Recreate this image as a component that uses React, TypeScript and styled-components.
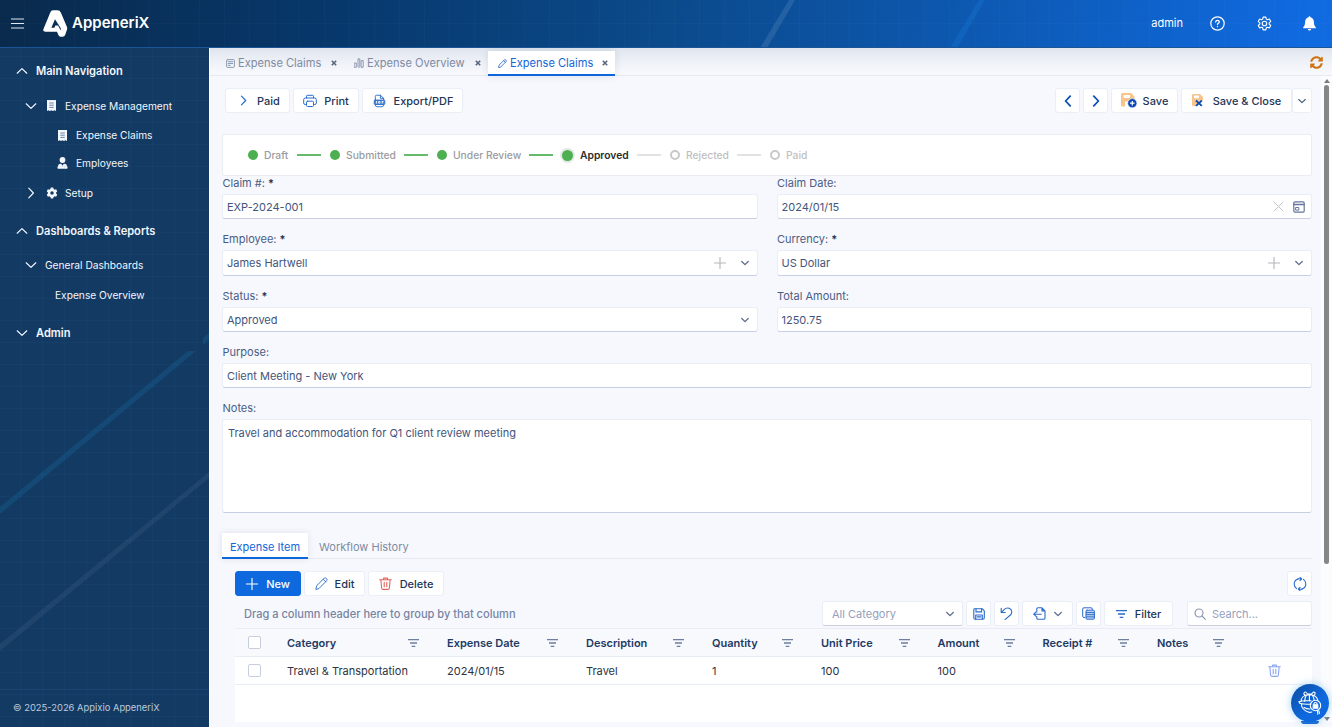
import type { ReactNode } from "react";
import styled, { createGlobalStyle, css } from "styled-components";

const GlobalStyle = createGlobalStyle`
  * {
    box-sizing: border-box;
  }

  body {
    margin: 0;
    overflow: hidden;
    font-family: Inter, "Liberation Sans", sans-serif;
    font-size: 11px;
    color: #41557d;
    background: #f0f5fb;
  }
`;

const Page = styled.div`
  display: flex;
  flex-direction: column;
  width: 1332px;
  height: 727px;
  overflow: hidden;
`;

/* ---------- header ---------- */

const Header = styled.header`
  position: relative;
  display: flex;
  align-items: center;
  flex: none;
  height: 48px;
  padding: 0 16px 1px 11px;
  color: #fff;
  border-bottom: 1px solid #1b5596;
  background: linear-gradient(
    97deg,
    #092a4c 0%,
    #07376a 24%,
    #0b4a8b 50%,
    #0d5ab5 75%,
    #106ae0 98%
  );
`;

const Decor = styled.svg`
  position: absolute;
  inset: 0;
  width: 100%;
  height: 100%;
  pointer-events: none;
`;

const Brand = styled.div`
  display: flex;
  align-items: center;
  gap: 4px;
  margin-left: 19px;
  font-size: 15px;
  font-weight: 600;
  line-height: 20px;
`;

const BrandName = styled.span`
  padding-bottom: 1px;
`;

const HeaderActions = styled.div`
  display: flex;
  align-items: center;
  margin-left: auto;
`;

const UserName = styled.span`
  margin-right: 27px;
  font-size: 11px;
`;

const HeaderIcon = styled.span<{ $gap?: number }>`
  display: flex;
  margin-right: ${({ $gap }) => $gap ?? 0}px;
`;

/* ---------- sidebar ---------- */

const Body = styled.div`
  display: flex;
  flex: 1;
  min-height: 0;
`;

const Sidebar = styled.aside`
  position: relative;
  display: flex;
  flex-direction: column;
  flex: none;
  width: 209px;
  padding-top: 6px;
  color: #f3f7fc;
  background: #133a63;
`;

const NavRow = styled.div<{ $indent: number; $height: number; $group?: boolean }>`
  display: flex;
  align-items: center;
  height: ${({ $height }) => $height}px;
  padding-left: ${({ $indent }) => $indent}px;
  font-size: ${({ $group }) => ($group ? 11.1 : 10.2)}px;
  font-weight: ${({ $group }) => ($group ? 600 : 400)};
  white-space: nowrap;
`;

const NavIcon = styled.span<{ $gap: number }>`
  display: flex;
  margin-right: ${({ $gap }) => $gap}px;
`;

const SidebarFooter = styled.div`
  display: flex;
  align-items: center;
  height: 38px;
  margin-top: auto;
  padding: 0 0 3px 13px;
  font-size: 9.4px;
  color: #bdcbdc;
  border-top: 1px solid #1c446e;
`;

/* ---------- workspace ---------- */

const Workspace = styled.main`
  display: flex;
  flex-direction: column;
  flex: 1;
  min-width: 0;
  border-left: 1px solid #fff;
  background: #f6f8fd;
`;

const DocTabs = styled.div`
  display: flex;
  flex: none;
  align-items: flex-end;
  height: 28px;
  padding-left: 6px;
  background: linear-gradient(#dfe4ee, #edf0f6 45%, #f6f8fc 90%);
  border-bottom: 1px solid #e6eaf3;
`;

const DocTab = styled.div<{ $active?: boolean; $width: number }>`
  display: flex;
  align-items: center;
  width: ${({ $width }) => $width}px;
  height: 25px;
  margin-bottom: -1px;
  padding: 1px 7px 0 10px;
  gap: 3px;
  font-size: 11.1px;
  white-space: nowrap;
  color: #7f8ba3;
  border-bottom: 2px solid transparent;

  ${({ $active }) =>
    $active &&
    css`
      color: #1366d6;
      background: #fff;
      border-bottom-color: #0f66d8;
      box-shadow: 0 0 8px rgba(40, 60, 100, 0.12);
    `}
`;

const TabClose = styled.span`
  display: flex;
  margin-left: auto;
`;

const TabRefresh = styled.span`
  display: flex;
  align-items: center;
  height: 25px;
  margin: 0 9px 0 auto;
`;

const ScrollArea = styled.div`
  display: flex;
  flex: 1;
  min-height: 0;
`;

const Content = styled.div`
  flex: 1;
  min-width: 0;
  height: 646px;
  padding: 0 9px 0 12px;
  overflow: hidden;
`;

const ScrollTrack = styled.div`
  display: flex;
  flex-direction: column;
  align-items: center;
  flex: none;
  width: 11px;
  height: 646px;
  padding: 3px 0 1px;
  background: #fbfcfe;
`;

const ScrollThumb = styled.div`
  width: 5px;
  height: 479px;
  margin: 2px 0 auto;
  border-radius: 3px;
  background: #868686;
`;

const ActionBar = styled.div`
  display: flex;
  gap: 3px;
  padding: 12px 0 0 3px;
`;

const Spacer = styled.div`
  flex: 1;
`;

const Button = styled.button<{ $width: number; $primary?: boolean; $gap?: number; $inset?: number }>`
  display: flex;
  flex: none;
  align-items: center;
  justify-content: center;
  gap: ${({ $gap }) => $gap ?? 8}px;
  width: ${({ $width }) => $width}px;
  height: 25px;
  padding: 0 0 0 ${({ $inset }) => $inset ?? 0}px;
  font: 500 11px Inter, "Liberation Sans", sans-serif;
  white-space: nowrap;
  color: ${({ $primary }) => ($primary ? "#fff" : "#1d3557")};
  background: ${({ $primary }) => ($primary ? "#0f69de" : "#fff")};
  border: 1px solid ${({ $primary }) => ($primary ? "#0f69de" : "#e9eef7")};
  border-radius: 3px;
`;

const SplitToggle = styled(Button)`
  margin-left: -3px;
`;

const Stepper = styled.div`
  display: flex;
  align-items: center;
  height: 42px;
  margin-top: 21px;
  padding-left: 25px;
  background: #fff;
  border: 1px solid #ebedf3;
  border-radius: 2px;
`;

const StepGroup = styled.div`
  display: flex;
  align-items: center;
`;

const Step = styled.div<{ $state: StepState; $width: number }>`
  display: flex;
  align-items: center;
  width: ${({ $width }) => $width}px;
  font-size: 10.3px;
  font-weight: ${({ $state }) => ($state === "current" ? 600 : 500)};
  color: ${({ $state }) =>
    $state === "current" ? "#2b2b2b" : $state === "done" ? "#9b9c9f" : "#bfc0c2"};
`;

const StepDot = styled.span<{ $state: StepState }>`
  flex: none;
  width: 10px;
  height: 10px;
  margin-right: 6px;
  border-radius: 50%;
  background: #4caf50;

  ${({ $state }) =>
    $state === "current" &&
    css`
      width: 11px;
      height: 11px;
      box-shadow: 0 0 0 2px #e3e8e4;
      margin-right: 7px;
    `}

  ${({ $state }) =>
    $state === "todo" &&
    css`
      background: #fff;
      border: 2px solid #c8c8c8;
    `}
`;

const StepLine = styled.span<{ $done: boolean }>`
  flex: none;
  width: 24px;
  height: 2px;
  margin-right: 9px;
  background: ${({ $done }) => ($done ? "#66bb6a" : "#e2e2e2")};
`;

/* ---------- form ---------- */

const Form = styled.div`
  display: grid;
  grid-template-columns: 1fr 1fr;
  column-gap: 19px;
`;

const Field = styled.div<{ $wide?: boolean; $height: number }>`
  display: flex;
  flex-direction: column;
  height: ${({ $height }) => $height}px;
  grid-column: ${({ $wide }) => ($wide ? "1 / -1" : "auto")};
`;

const Label = styled.label`
  height: 18px;
  padding-left: 0.5px;
  font-size: 11px;
  line-height: 15px;
  color: #4a5c83;

  b {
    font-weight: 600;
    color: #26334d;
  }
`;

const Control = styled.div<{ $height?: number; $multiline?: boolean }>`
  display: flex;
  align-items: ${({ $multiline }) => ($multiline ? "flex-start" : "center")};
  height: ${({ $height }) => $height ?? 25}px;
  padding: ${({ $multiline }) => ($multiline ? "6px 5px" : "0 6px 0 4px")};
  font-size: 11px;
  color: #42557c;
  background: #fff;
  border: 1px solid #e9edf5;
  border-bottom-color: #c9cfe2;
  border-radius: 3px;
`;

const ControlIcons = styled.span<{ $gap?: number; $end?: number }>`
  display: flex;
  align-items: center;
  gap: ${({ $gap }) => $gap ?? 0}px;
  margin-left: auto;
  margin-right: ${({ $end }) => $end ?? 0}px;
`;

/* ---------- details ---------- */

const DetailTabs = styled.div`
  display: flex;
  height: 26px;
  border-bottom: 1px solid #e4e9f2;
`;

const DetailTab = styled.div<{ $active?: boolean }>`
  display: flex;
  align-items: center;
  justify-content: center;
  height: 26px;
  padding: 3px 8px 0;
  font-size: 11px;
  white-space: nowrap;
  color: #7f8ba3;
  border-bottom: 2px solid transparent;
  margin-right: 3px;

  ${({ $active }) =>
    $active &&
    css`
      width: 86px;
      color: #1366d6;
      background: #fff;
      border-bottom-color: #0f66d8;
      box-shadow: 0 0 6px rgba(40, 60, 100, 0.12);
    `}
`;

const Details = styled.div`
  padding-left: 13px;
`;

const DetailBar = styled.div<{ $top: number }>`
  display: flex;
  align-items: center;
  gap: 3px;
  height: 25px;
  margin-top: ${({ $top }) => $top}px;
`;

const GroupHint = styled.span`
  flex: 1;
  padding-left: 9px;
  font-size: 11.05px;
  font-weight: 500;
  color: #7685a2;
`;

const FilterBox = styled.div<{ $width: number; $left?: number }>`
  display: flex;
  align-items: center;
  width: ${({ $width }) => $width}px;
  height: 25px;
  margin-left: ${({ $left }) => $left ?? 0}px;
  padding: 0 8px 0 ${({ $left }) => ($left ? 6 : 9)}px;
  gap: 6px;
  font-size: 11px;
  color: #94a0bc;
  background: #fff;
  border: 1px solid #e9edf5;
  border-bottom-color: #c9cfdc;
  border-radius: 3px;
`;

const Table = styled.div`
  height: 94px;
  margin-top: 2px;
  background: #fff;
`;

const TableRow = styled.div<{ $head?: boolean }>`
  display: grid;
  grid-template-columns: 40px 160px 139px 126px 109px 116.5px 105px 114.5px 95px 1fr;
  align-items: center;
  height: ${({ $head }) => ($head ? 29 : 28)}px;
  font-size: 11px;
  font-weight: ${({ $head }) => ($head ? 600 : 400)};
  color: ${({ $head }) => ($head ? "#1d3a63" : "#2c3342")};
  background: ${({ $head }) => ($head ? "#f7f9fd" : "#fff")};
  border-top: ${({ $head }) => ($head ? "1px solid #e8ecf5" : "0")};
  border-bottom: 1px solid #e9eef6;
`;

const Cell = styled.div`
  display: flex;
  align-items: center;
  justify-content: space-between;
  padding: 0 16px 0 12px;
  white-space: nowrap;
`;

const RowAction = styled.div`
  display: flex;
  justify-content: center;
  padding-right: 3px;
`;

const Checkbox = styled.span`
  width: 13px;
  height: 13px;
  margin-left: 13px;
  background: #fff;
  border: 1px solid #c6cddf;
  border-radius: 2px;
`;

const Assistant = styled.div`
  position: absolute;
  left: 1291px;
  top: 684px;
  display: flex;
  align-items: center;
  justify-content: center;
  width: 38px;
  height: 38px;
  border-radius: 50%;
  background: linear-gradient(135deg, #0b4da2, #0f69de 60%);
  box-shadow: 0 0 6px 2px rgba(90, 180, 240, 0.35);
`;

const AssistantEdge = styled.div`
  position: absolute;
  left: 1301px;
  top: 721px;
  width: 18px;
  height: 3px;
  border-radius: 0 0 9px 9px;
  background: #0f5fce;
`;

/* ---------- icons ---------- */

interface IStrokeProps {
  size?: number;
  width?: number;
  color?: string;
  children: ReactNode;
}

const Stroke = ({ size = 12, width = 1, color = "currentColor", children }: IStrokeProps) => (
  <svg
    width={size}
    height={size}
    viewBox={`0 0 ${size} ${size}`}
    fill="none"
    stroke={color}
    strokeWidth={width}
    strokeLinecap="round"
    strokeLinejoin="round"
  >
    {children}
  </svg>
);

type Direction = "up" | "down" | "left" | "right";

const CHEVRONS: Record<Direction, string> = {
  up: "M1.2 8.2 6 3.6l4.8 4.6",
  down: "M1.2 3.8 6 8.4l4.8-4.6",
  left: "M8.2 1.2 3.6 6l4.6 4.8",
  right: "M3.8 1.2 8.4 6l-4.6 4.8"
};

interface IChevronProps {
  to: Direction;
  size?: number;
  width?: number;
  color?: string;
}

const Chevron = ({ to, size = 12, width = 1.2, color = "currentColor" }: IChevronProps) => (
  <svg
    width={size}
    height={size}
    viewBox="0 0 12 12"
    fill="none"
    stroke={color}
    strokeWidth={(width * 12) / size}
    strokeLinecap="round"
    strokeLinejoin="round"
  >
    <path d={CHEVRONS[to]} />
  </svg>
);

const Logo = () => (
  <svg width="25" height="27" viewBox="130 27 75 82">
    <path
      fill="#fff"
      fillRule="evenodd"
      d="M160 28h13q8 0 11 7l18 43q2 5 0 10l-5 14q-2 6-8 6h-6q-5 0-7-6l-4-9h-35q-9 0-6-8l21-51q2-6 8-6zM166 55l-11 26h9l3-7h8l6 11 4 4-2-7z"
    />
  </svg>
);

const ReceiptIcon = () => (
  <svg width="9" height="11" viewBox="0 0 9 11">
    <path fill="#f3f7fc" d="M0 0h9v11l-1.5-.7L6 11l-1.5-.7L3 11l-1.5-.7L0 11z" />
    <path stroke="#5c7898" strokeWidth=".9" d="M2.3 3h4.4M2.3 5.2h4.4M2.3 7.4h4.4" />
  </svg>
);

const PersonIcon = () => (
  <svg width="11" height="12" viewBox="0 0 11 12" fill="#f3f7fc">
    <circle cx="5.5" cy="3" r="2.9" />
    <path d="M1 11.5V9q0-2 2.3-2.2h.9l1.3 2 1.3-2h.9Q10 7 10 9v2.5z" />
    <path d="M.5 9.5h10v2H.5z" />
  </svg>
);

const gearTeeth = [0, 60, 120, 180, 240, 300];

const SolidGear = () => (
  <svg width="12" height="12" viewBox="-6 -6 12 12">
    {gearTeeth.map((angle) => (
      <rect key={angle} x="-1.4" y="-5.4" width="2.8" height="3" rx=".6" fill="#f3f7fc" transform={`rotate(${angle})`} />
    ))}
    <circle r="3" fill="none" stroke="#f3f7fc" strokeWidth="2.5" />
  </svg>
);

const OutlineGear = () => (
  <svg width="15" height="15" viewBox="0 0 24 24" fill="none" stroke="#fff" strokeWidth="1.8" strokeLinejoin="round">
    <path d="M9.8 2h4.4l.7 3.300 1.700 1 3.200-1.100 2.200 3.800-2.500 2.300v1.900l2.500 2.300-2.200 3.800-3.200-1.100-1.700 1-.7 3.300H9.800l-.7-3.300-1.700-1-3.200 1.100L2 15.500l2.500-2.300v-1.900L2 9l2.200-3.800 3.200 1.100 1.700-1z" transform="translate(0 -.3)" />
    <circle cx="12" cy="12" r="3.6" />
  </svg>
);

const BellIcon = () => (
  <svg width="13" height="15" viewBox="0 0 13 15" fill="#fff">
    <path d="M6.5.3q.9 0 1 1C10 2 10.9 4 10.9 6.3c0 2.4.5 3.4 1.9 5v.9H.2v-.9c1.4-1.6 1.9-2.6 1.9-5C2.1 4 3 2 5.5 1.300q.1-1 1-1z" />
    <path d="M4.8 12.9h3.4Q8 14.5 6.5 14.500T4.8 12.9z" />
  </svg>
);

const PencilIcon = ({ size, color }: { size: number; color: string }) => (
  <svg
    width={size}
    height={size}
    viewBox="0 0 14 14"
    fill="none"
    stroke={color}
    strokeWidth={13 / size}
    strokeLinecap="round"
    strokeLinejoin="round"
  >
    <path d="M1 13l.8-3.6L9.9 1.300q1.3-.9 2.4.3t.3 2.4L4.500 12.2z" />
    <path d="M8.8 2.500l2.7 2.7" />
  </svg>
);

const NoteIcon = () => (
  <Stroke size={9} width={0.9} color="#8491aa">
    <rect x=".6" y=".6" width="7.8" height="7.8" rx="1" />
    <path d="M2.3 2.7h4.4M2.3 4.5h4.4M2.3 6.3h2" />
  </Stroke>
);

const ChartIcon = () => (
  <Stroke size={10} width={0.9} color="#8491aa">
    <rect x=".6" y="5" width="1.7" height="4.3" />
    <rect x="4" y=".8" width="1.8" height="8.5" rx=".7" />
    <rect x="7.500" y="2.6" width="1.7" height="6.7" />
  </Stroke>
);

const CloseMark = () => (
  <svg width="6" height="6" viewBox="0 0 6 6" stroke="#59657c" strokeWidth="1.6">
    <path d="M.8.8l4.4 4.4M5.2.8.8 5.2" />
  </svg>
);

const SyncIcon = () => (
  <svg width="13" height="13" viewBox="0 0 512 512" fill="#cf720f">
    <path d="M370.7 133.3C339.5 104 298.9 88 255.8 88c-77.5.1-144.3 53.2-162.8 126.9-1.3 5.4-6.1 9.1-11.7 9.1H24.1c-7.5 0-13.2-6.8-11.8-14.2C33.900 94.900 134.800 8 256 8c66.400 0 126.800 26.100 171.300 68.700L463 41c15.100-15.100 41-4.400 41 17v134c0 13.300-10.700 24-24 24H346c-21.400 0-32.100-25.900-17-41zM32 296h134c21.400 0 32.100 25.900 17 41l-41.800 41.800c31.300 29.300 71.800 45.300 114.900 45.200 77.400-.1 144.300-53.100 162.800-126.800 1.300-5.400 6.100-9.200 11.700-9.200h57.300c7.500 0 13.200 6.800 11.800 14.200C478.100 417.100 377.200 504 256 504c-66.400 0-126.800-26.100-171.300-68.700L49 471c-15.100 15.100-41 4.400-41-17V320c0-13.300 10.700-24 24-24z" />
  </svg>
);

const PrinterIcon = () => (
  <Stroke size={14} color="#2a6ccb">
    <path d="M3.5 4V2.2q0-.9.9-.9h5.2q.9 0 .9.9V4" />
    <path d="M3.5 10.5H2.2Q.7 10.5.7 9V5.6Q.7 4 2.3 4h9.400q1.6 0 1.6 1.6V9q0 1.5-1.5 1.5h-1.3" />
    <rect x="3.5" y="7.2" width="7" height="5.3" rx="1" />
  </Stroke>
);

const PdfIcon = () => (
  <svg width="13" height="14" viewBox="0 0 14 14" fill="none" stroke="#2a6ccb" strokeLinecap="round" strokeLinejoin="round">
    <path d="M2.5 6V2q0-1.2 1.2-1.200H8l3.5 3.3V6M8 .8v3.3h3.5" />
    <rect x="1.300" y="6" width="11.4" height="4.8" rx="1" fill="#4a86d8" />
    <path d="M2.5 11.2q.1 2 1.7 2h5.6q1.6 0 1.7-2" />
    <path stroke="#fff" strokeWidth=".9" d="M3.8 7.5v1.8M6.5 7.5h1v1.800h-1zM10 7.5v1.8M10 7.5h1" />
  </svg>
);

const SaveAddIcon = () => (
  <svg width="16" height="15" viewBox="0 0 16 15">
    <path fill="#f8c48a" fillRule="evenodd" d="M1.5 0H10l3.5 3.5V13.5H1.5Q0 13.5 0 12V1.5Q0 0 1.500 0zM2.5 2v3H9V2zM4 8.5v5h3.5v-5z" />
    <circle cx="11.3" cy="10.2" r="4.6" fill="#0a49b5" stroke="#fff" strokeWidth=".6" />
    <path stroke="#fff" strokeWidth="1.2" d="M11.3 7.900v4.6M9 10.2h4.6" />
  </svg>
);

const SaveCloseIcon = () => (
  <svg width="12" height="13" viewBox="0 0 12 13">
    <path fill="#f8c48a" fillRule="evenodd" d="M1.2 0H8l3 3v3.5H7L5.5 9v3H1.2Q0 12 0 10.8V1.2Q0 0 1.2 0zM2 1.6v2.6h5V1.6z" />
    <path stroke="#0a49b5" strokeWidth="1.8" d="M4 6.5l5.8 5.3M9.8 6.5 4 11.8" />
  </svg>
);

const PlusIcon = ({ color = "currentColor" }: { color?: string }) => (
  <svg width="12" height="12" viewBox="0 0 12 12" stroke={color} strokeWidth="1.1">
    <path d="M6 0v12M0 6h12" />
  </svg>
);

const TrashIcon = ({ color }: { color: string }) => (
  <Stroke size={13} color={color} width={1.1}>
    <path d="M.7 2.8h11.6M4.3 2.6l.3-1.5h3.8l.3 1.5M1.9 3l.7 8q.2 1.4 1.5 1.4h4.8q1.3 0 1.5-1.4l.7-8M5.2 5.2v4.6M7.8 5.2v4.6" />
  </Stroke>
);

const CalendarIcon = () => (
  <Stroke size={12} width={1.2} color="#67779a">
    <rect x=".8" y=".8" width="10.4" height="10.4" rx="1.3" />
    <path d="M1 3.5h10" strokeWidth="1.6" />
    <rect x="3" y="6.5" width="2.8" height="2.6" strokeWidth="1" />
  </Stroke>
);

const ClearIcon = () => (
  <Stroke size={11} color="#c3c5c9">
    <path d="M1 1l9 9M10 1l-9 9" />
  </Stroke>
);

const FilterLines = ({ color = "#6c7f9f" }: { color?: string }) => (
  <svg width="11" height="8" viewBox="0 0 11 8" stroke={color} strokeWidth="1.3">
    <path d="M0 .7h11M2 4h7M3.7 7.3h3.6" />
  </svg>
);

const RefreshIcon = () => (
  <Stroke size={14} color="#2a6ccb" width={1.1}>
    <path d="M5 1.9C2.6 2.7 1.2 4.7 1.2 7c0 2 .9 3.5 2.4 4.6M9 12.1c2.4-.8 3.8-2.8 3.8-5.1 0-2-.9-3.5-2.4-4.6" />
    <path d="M7 .3 8.6 2 7 3.6M8.6 2Q6 1.6 5 1.9M7 13.7 5.4 12 7 10.4M5.4 12Q8 12.4 9 12.1" />
  </Stroke>
);

const FloppyIcon = () => (
  <Stroke size={12} color="#2a6ccb" width={1.1}>
    <path d="M1.7.8h7.6l2 2v7q0 1.4-1.4 1.4H2.2Q.8 11.2.8 9.8V1.7q0-.9.9-.9z" />
    <path d="M3 .9v3h5.6v-3M2.7 11V7h6.6v4M4.2 8.9h3.6" />
  </Stroke>
);

const UndoIcon = () => (
  <Stroke size={13} color="#2a6ccb" width={1.1}>
    <path d="M1.2 1.3v4.2h4M1.6 5.2 4.3 2.4Q6.6.3 9.2 1.3q2.4 1 2.6 3.5 0 1.8-1.4 3.2L5 12.6" />
  </Stroke>
);

const ExportIcon = () => (
  <Stroke size={13} color="#2a6ccb" width={1.1}>
    <path d="M3.8 5V2q0-1.2 1.2-1.2h4l3 3V11q0 1.3-1.3 1.3H5Q3.8 12.3 3.8 11V9.5M9 .9v3h3M.7 7.2h7.6M2.8 5.2l-2 2 2 2" />
  </Stroke>
);

const ColumnsIcon = () => (
  <Stroke size={13} color="#2a6ccb" width={1}>
    <path d="M2.6 10.5H2Q.7 10.5.7 9.2V2Q.7.8 2 .8h7q1.3 0 1.3 1.3v.6" />
    <rect x="4" y="3.2" width="8.4" height="9" rx="1" fill="#c2d6f3" />
    <path d="M4.2 5.6h8M4.2 7.7h8M4.2 9.9h8" />
  </Stroke>
);

const SearchIcon = () => (
  <Stroke size={12} color="#8d99b3" width={1.2}>
    <circle cx="5" cy="5" r="4" />
    <path d="M8 8l3.3 3.3" />
  </Stroke>
);

const AssistantIcon = () => (
  <Stroke size={26} color="#fff" width={1.1}>
    <path d="M8.5 5.5Q6 4 7.3 2.5T10.5 4h4.2q1.7-2.6 3-1.5T16.8 5.5M4 11.5C4 8 6.5 4.7 12.5 4.7S20.5 8 21 11M9.5 5q-2 3-1.8 6.5M15.3 5q1.6 2.5 1.8 5M12.4 4.7V11M2 11.5q0 2 2.7 2.3 4 .7 9.3.2M2 11.5q3.5-1 12-.7M4.3 14q.3 6 7.5 8.2 1.5.4 3-.2M7 17.5q3 1.7 6 1.5" />
    <circle cx="18.5" cy="15.5" r="5.2" />
    <rect x="16.2" y="14.8" width="4.6" height="3.5" fill="#fff" />
    <path d="M17 14.5v-1.2q1.5-1.7 3 0v1.2M20.5 20.8l.3 3.4M21.8 20.5l.7 3" />
  </Stroke>
);

/* ---------- data ---------- */

type StepState = "done" | "current" | "todo";

interface IStep {
  title: string;
  state: StepState;
  width: number;
}

const STEPS: IStep[] = [
  { title: "Draft", state: "done", width: 49 },
  { title: "Submitted", state: "done", width: 74 },
  { title: "Under Review", state: "done", width: 92 },
  { title: "Approved", state: "current", width: 75 },
  { title: "Rejected", state: "todo", width: 67 },
  { title: "Paid", state: "todo", width: 50 }
];

const COLUMNS = [
  { title: "Category", value: "Travel & Transportation" },
  { title: "Expense Date", value: "2024/01/15" },
  { title: "Description", value: "Travel" },
  { title: "Quantity", value: "1" },
  { title: "Unit Price", value: "100" },
  { title: "Amount", value: "100" },
  { title: "Receipt #", value: "" },
  { title: "Notes", value: "" }
];

const headerGrid = Array.from({ length: 53 }, (_, i) => `M${24.5 + i * 25} 0v48`).join("");
const sidebarColumns = Array.from({ length: 9 }, (_, i) => `M${20.5 + i * 22} 0v680`).join("");
const sidebarRows = Array.from({ length: 31 }, (_, i) => `M0 ${8.5 + i * 22}h209`).join("");

/* ---------- sections ---------- */

const TopBar = () => (
  <Header>
    <Decor>
      <path d={`${headerGrid}M0 23.5h1332`} stroke="#fff" strokeOpacity=".022" />
      <path d="M789 0h6l-28 48h-7z" fill="#fff" fillOpacity=".1" />
      <path d="M979 0h6l-28 48h-7z" fill="#1c8fe8" fillOpacity=".22" />
    </Decor>
    <svg width="13" height="11" viewBox="0 0 13 11" stroke="#dfe8f2" strokeWidth="1">
      <path d="M0 1h13M0 5.500h13M0 10h13" />
    </svg>
    <Brand>
      <Logo />
      <BrandName>AppeneriX</BrandName>
    </Brand>
    <HeaderActions>
      <UserName>admin</UserName>
      <HeaderIcon $gap={32}>
        <Stroke size={15} width={1.2} color="#fff">
          <circle cx="7.5" cy="7.5" r="6.7" />
          <path d="M5.7 6q.1-1.7 1.8-1.7t1.8 1.5q0 .9-1 1.5-.8.5-.8 1.3M7.5 10.6v.1" strokeWidth="1.3" />
        </Stroke>
      </HeaderIcon>
      <HeaderIcon $gap={31}>
        <OutlineGear />
      </HeaderIcon>
      <HeaderIcon>
        <BellIcon />
      </HeaderIcon>
    </HeaderActions>
  </Header>
);

const Navigation = () => (
  <Sidebar>
    <Decor>
      <path d={sidebarColumns + sidebarRows} stroke="#3f7fb5" strokeOpacity=".07" />
      <path d="M188 303h8L0 466v-7z" fill="#1580b0" fillOpacity=".22" />
      <path d="M203 290l6-5v7l-6 5z" fill="#1580b0" fillOpacity=".22" />
      <path d="M209 424v6L0 603v-7z" fill="#fff" fillOpacity=".06" />
    </Decor>
    <NavRow $indent={16} $height={34} $group>
      <NavIcon $gap={8}><Chevron to="up" /></NavIcon>
      Main Navigation
    </NavRow>
    <NavRow $indent={25} $height={35}>
      <NavIcon $gap={10}><Chevron to="down" /></NavIcon>
      <NavIcon $gap={9}><ReceiptIcon /></NavIcon>
      Expense Management
    </NavRow>
    <NavRow $indent={58} $height={24}>
      <NavIcon $gap={9}><ReceiptIcon /></NavIcon>
      Expense Claims
    </NavRow>
    <NavRow $indent={57} $height={31}>
      <NavIcon $gap={8}><PersonIcon /></NavIcon>
      Employees
    </NavRow>
    <NavRow $indent={25} $height={30}>
      <NavIcon $gap={9}><Chevron to="right" /></NavIcon>
      <NavIcon $gap={7}><SolidGear /></NavIcon>
      Setup
    </NavRow>
    <NavRow $indent={16} $height={46} $group>
      <NavIcon $gap={8}><Chevron to="up" /></NavIcon>
      Dashboards &amp; Reports
    </NavRow>
    <NavRow $indent={25} $height={22}>
      <NavIcon $gap={8}><Chevron to="down" /></NavIcon>
      General Dashboards
    </NavRow>
    <NavRow $indent={55} $height={38}>Expense Overview</NavRow>
    <NavRow $indent={16} $height={38} $group>
      <NavIcon $gap={8}><Chevron to="down" /></NavIcon>
      Admin
    </NavRow>
    <SidebarFooter>© 2025-2026 Appixio AppeneriX</SidebarFooter>
  </Sidebar>
);

const Caret = () => <Chevron to="down" size={8} width={1.3} color="#5c6b8b" />;

const Lookup = () => (
  <ControlIcons $gap={15} $end={2}>
    <PlusIcon color="#b3b5ba" />
    <Caret />
  </ControlIcons>
);

const ClaimForm = () => (
  <Form>
    <Field $height={56}>
      <Label>Claim #: <b>*</b></Label>
      <Control>EXP-2024-001</Control>
    </Field>
    <Field $height={56}>
      <Label>Claim Date:</Label>
      <Control>
        2024/01/15
        <ControlIcons $gap={9}>
          <ClearIcon />
          <CalendarIcon />
        </ControlIcons>
      </Control>
    </Field>
    <Field $height={57}>
      <Label>Employee: <b>*</b></Label>
      <Control $height={26}>
        James Hartwell
        <Lookup />
      </Control>
    </Field>
    <Field $height={57}>
      <Label>Currency: <b>*</b></Label>
      <Control $height={26}>
        US Dollar
        <Lookup />
      </Control>
    </Field>
    <Field $height={56}>
      <Label>Status: <b>*</b></Label>
      <Control>
        Approved
        <ControlIcons $end={2}>
          <Caret />
        </ControlIcons>
      </Control>
    </Field>
    <Field $height={56}>
      <Label>Total Amount:</Label>
      <Control>1250.75</Control>
    </Field>
    <Field $wide $height={56}>
      <Label>Purpose:</Label>
      <Control>Client Meeting - New York</Control>
    </Field>
    <Field $wide $height={132}>
      <Label>Notes:</Label>
      <Control $multiline $height={94}>
        Travel and accommodation for Q1 client review meeting
      </Control>
    </Field>
  </Form>
);

const ExpenseItems = () => (
  <Details>
    <DetailBar $top={12}>
      <Button $width={66} $primary>
        <PlusIcon />
        New
      </Button>
      <Button $width={61} $gap={7}>
        <PencilIcon size={13} color="#2a6ccb" />
        Edit
      </Button>
      <Button $width={76}>
        <TrashIcon color="#e4635f" />
        Delete
      </Button>
      <Spacer />
      <Button $width={25}><RefreshIcon /></Button>
    </DetailBar>
    <DetailBar $top={5}>
      <GroupHint>Drag a column header here to group by that column</GroupHint>
      <FilterBox $width={141}>
        All Category
        <ControlIcons>
          <Caret />
        </ControlIcons>
      </FilterBox>
      <Button $width={25}><FloppyIcon /></Button>
      <Button $width={25}><UndoIcon /></Button>
      <Button $width={51}>
        <ExportIcon />
        <Caret />
      </Button>
      <Button $width={25}><ColumnsIcon /></Button>
      <Button $width={69}>
        <FilterLines color="#2a6ccb" />
        Filter
      </Button>
      <FilterBox $width={125} $left={11}>
        <SearchIcon />
        Search...
      </FilterBox>
    </DetailBar>
    <Table>
      <TableRow $head>
        <Checkbox />
        {COLUMNS.map(({ title }) => (
          <Cell key={title}>
            {title}
            <FilterLines />
          </Cell>
        ))}
      </TableRow>
      <TableRow>
        <Checkbox />
        {COLUMNS.map(({ title, value }) => (
          <Cell key={title}>{value}</Cell>
        ))}
        <RowAction>
          <TrashIcon color="#8aa4f0" />
        </RowAction>
      </TableRow>
    </Table>
  </Details>
);

const App = () => (
  <Page>
    <GlobalStyle />
    <TopBar />
    <Body>
      <Navigation />
      <Workspace>
        <DocTabs>
          <DocTab $width={128}>
            <NoteIcon />
            Expense Claims
            <TabClose><CloseMark /></TabClose>
          </DocTab>
          <DocTab $width={144}>
            <ChartIcon />
            Expense Overview
            <TabClose><CloseMark /></TabClose>
          </DocTab>
          <DocTab $width={127} $active>
            <PencilIcon size={9} color="#3b78d0" />
            Expense Claims
            <TabClose><CloseMark /></TabClose>
          </DocTab>
          <TabRefresh><SyncIcon /></TabRefresh>
        </DocTabs>
        <ScrollArea>
          <Content>
            <ActionBar>
              <Button $width={65} $inset={3}>
                <Chevron to="right" size={11} color="#2a6ccb" />
                Paid
              </Button>
              <Button $width={66} $gap={7}>
                <PrinterIcon />
                Print
              </Button>
              <Button $width={101} $inset={1}>
                <PdfIcon />
                Export/PDF
              </Button>
              <Spacer />
              <Button $width={25}><Chevron to="left" width={1.8} color="#0d4fb8" /></Button>
              <Button $width={25}><Chevron to="right" width={1.8} color="#0d4fb8" /></Button>
              <Button $width={67} $gap={6}>
                <SaveAddIcon />
                Save
              </Button>
              <Button $width={111} $gap={9}>
                <SaveCloseIcon />
                Save &amp; Close
              </Button>
              <SplitToggle $width={20}>
                <Chevron to="down" size={8} width={1.2} color="#49607f" />
              </SplitToggle>
            </ActionBar>
            <Stepper>
              {STEPS.map(({ title, state, width }, index) => (
                <StepGroup key={title}>
                  {index > 0 && <StepLine $done={state !== "todo"} />}
                  <Step $state={state} $width={width}>
                    <StepDot $state={state} />
                    {title}
                  </Step>
                </StepGroup>
              ))}
            </Stepper>
            <ClaimForm />
            <DetailTabs>
              <DetailTab $active>Expense Item</DetailTab>
              <DetailTab>Workflow History</DetailTab>
            </DetailTabs>
            <ExpenseItems />
          </Content>
          <ScrollTrack>
            <svg width="6" height="4" viewBox="0 0 6 4" fill="#7c7c7c"><path d="M3 0l3 4H0z" /></svg>
            <ScrollThumb />
            <svg width="6" height="4" viewBox="0 0 6 4" fill="#7c7c7c"><path d="M3 4l3-4H0z" /></svg>
          </ScrollTrack>
        </ScrollArea>
      </Workspace>
    </Body>
    <AssistantEdge />
    <Assistant>
      <AssistantIcon />
    </Assistant>
  </Page>
);

export default App;
